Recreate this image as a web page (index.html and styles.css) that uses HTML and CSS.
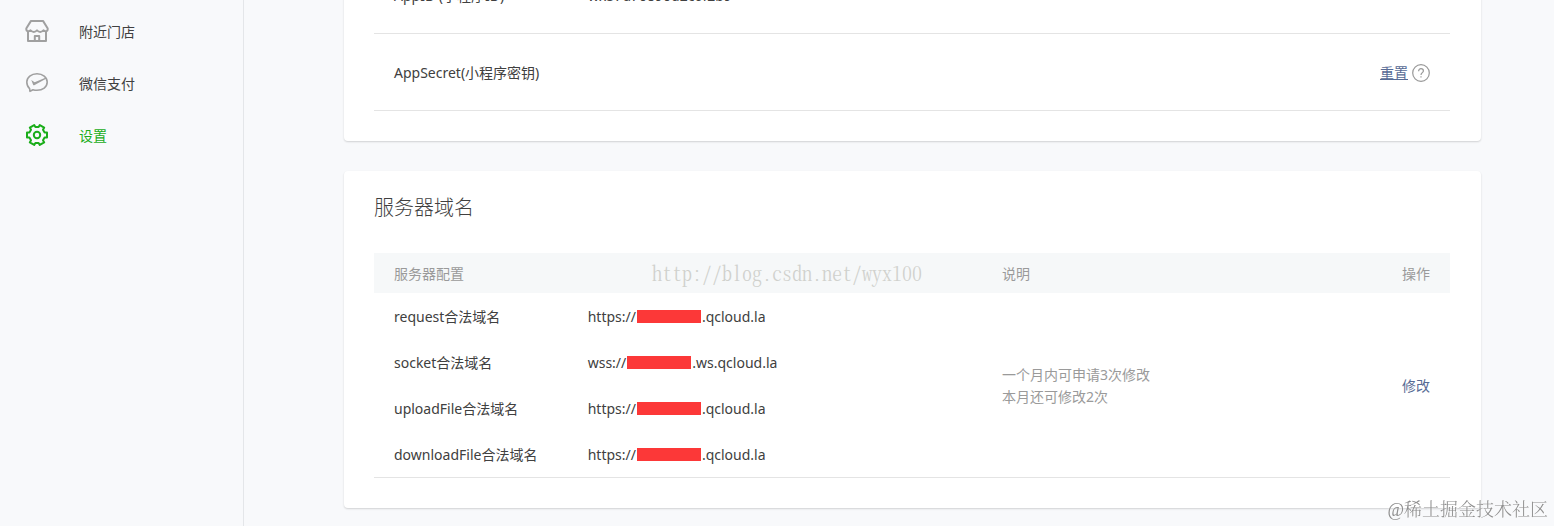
FILE: index.html
```html
<!DOCTYPE html>
<html lang="zh-CN">
<head>
<meta charset="utf-8">
<title>设置</title>
<link rel="stylesheet" href="styles.css">
</head>
<body>
<div class="layout">
  <nav class="sidebar">
    <a class="nav-item" href="#stores">
      <svg class="nav-icon" viewBox="0 0 24 24"><path d="M6 1.900H18L22.600 9.200C23.200 12 20.800 13.300 18.400 11.400C16.400 13.400 14 13.400 12 11.400C10 13.400 7.600 13.400 5.600 11.400C3.200 13.300.800 12 1.400 9.200Z"/><path d="M3 12.500V22H21V12.500M9.800 22V17H14.200V22"/></svg>
      <span>附近门店</span>
    </a>
    <a class="nav-item" href="#pay">
      <svg class="nav-icon thin" viewBox="0 0 24 24"><path d="M4.600 17.600C2.800 16 1.800 13.700 1.800 11.100C1.800 6.200 6.300 2.700 12 2.700S22.200 6.200 22.200 11.100S17.700 19.300 12 19.300C10.600 19.300 9.200 19.100 8 18.700L5 20.300Z"/><path class="tick" d="M6.300 8.900L9.600 11.200L21 6.500L21.500 7.500L9.200 14.200Q8.500 14.500 8.100 13.700Z"/></svg>
      <span>微信支付</span>
    </a>
    <a class="nav-item active" href="#settings" aria-current="page">
      <svg class="nav-icon" viewBox="0 0 24 24"><path d="M19.600 9.400L22 9.500V14.500L19.600 14.600L18 17.300L19.200 19.400L14.800 21.900L13.600 19.900H10.400L9.200 21.900L4.800 19.400L6 17.300L4.400 14.600L2 14.500V9.500L4.400 9.400L6 6.700L4.800 4.600L9.200 2.100L10.400 4.100H13.600L14.800 2.100L19.200 4.600L18 6.700Z"/><circle cx="12" cy="12" r="3.200"/></svg>
      <span>设置</span>
    </a>
  </nav>
  <main class="content">
    <section class="card account">
      <div class="field"><span class="label">AppID (小程序ID)</span><span>wx57d70890d2c6f2b9</span></div>
      <div class="field">
        <span class="label">AppSecret(小程序密钥)</span>
        <span class="actions"><a class="link underlined" href="#reset">重置</a><button class="help" type="button" aria-label="帮助"><svg viewBox="0 0 18 18"><circle cx="9" cy="9" r="8.300"/><path d="M6.600 7.200C6.600 5.600 7.600 4.700 9 4.700S11.400 5.600 11.400 6.900C11.400 8.600 9 8.700 9 10.900M9 12.300V13.500"/></svg></button></span>
      </div>
    </section>
    <section class="card">
      <h2 class="title">服务器域名</h2>
      <div class="table-wrap">
        <table class="domains">
          <colgroup><col class="col-name"><col class="col-host"><col><col class="col-action"></colgroup>
          <thead><tr><th>服务器配置</th><th></th><th>说明</th><th class="right">操作</th></tr></thead>
          <tbody>
            <tr><td>request合法域名</td><td>https://<span class="redacted"></span>.qcloud.la</td><td class="note" rowspan="4">一个月内可申请3次修改<br>本月还可修改2次</td><td class="right" rowspan="4"><a class="link" href="#edit">修改</a></td></tr>
            <tr><td>socket合法域名</td><td>wss://<span class="redacted"></span>.ws.qcloud.la</td></tr>
            <tr><td>uploadFile合法域名</td><td>https://<span class="redacted"></span>.qcloud.la</td></tr>
            <tr><td>downloadFile合法域名</td><td>https://<span class="redacted"></span>.qcloud.la</td></tr>
          </tbody>
        </table>
        <span class="blog-mark">http://blog.csdn.net/wyx100</span>
      </div>
    </section>
  </main>
</div>
<span class="site-mark">@稀土掘金技术社区</span>
</body>
</html>
```
FILE: styles.css
```css
* { box-sizing: border-box; }
body {
  margin: 0;
  overflow: hidden;
  background: #f8f9fb;
  color: #404040;
  font: 400 14px/22px "Noto Sans", "Noto Sans CJK SC", sans-serif;
}
a { color: inherit; text-decoration: none; }
.layout { display: flex; height: 100vh; }
.sidebar {
  flex: 0 0 244px;
  padding-top: 5px;
  border-right: 1px solid #e4e6e9;
}
.nav-item {
  display: flex;
  align-items: center;
  gap: 30px;
  height: 52px;
  padding-left: 25px;
}
.nav-item span { padding-top: 2px; }
.nav-icon {
  width: 24px;
  height: 24px;
  fill: none;
  stroke: #a0a0a0;
  stroke-width: 2;
  stroke-linejoin: round;
}
.thin { stroke-width: 1.6; }
.nav-icon .tick { fill: #a0a0a0; stroke: none; }
.active { color: #1aad19; }
.active .nav-icon { stroke: #1aad19; }
.content { flex: 1; padding: 0 73px 0 100px; }
.card {
  padding: 19px 31px 30px 30px;
  margin-bottom: 30px;
  background: #fff;
  border-radius: 4px;
  box-shadow: 0 1px 2px rgba(0, 0, 0, .16);
}
.account { margin-top: -43px; padding-top: 0; }
.field {
  display: flex;
  align-items: center;
  height: 77px;
  padding: 2px 20px 0;
  border-bottom: 1px solid #e4e4e4;
}
.label { flex: 0 0 194px; }
.actions { display: flex; align-items: center; gap: 4px; margin-left: auto; }
.link { color: #576b95; }
.underlined { text-decoration: underline; }
.help { display: block; width: 18px; height: 18px; padding: 0; border: 0; background: none; }
.help svg { display: block; fill: none; stroke: #999; stroke-width: 1.2; }
.title { margin: 0 0 27px; font-size: 20px; line-height: 36px; font-weight: 300; }
.table-wrap { position: relative; }
.domains {
  width: 100%;
  table-layout: fixed;
  border-collapse: separate;
  border-spacing: 0;
  border-bottom: 1px solid #e4e4e4;
}
.col-name { width: 18%; }
.col-host { width: 38.5%; }
.col-action { width: 10%; }
th { height: 40px; padding: 2px 20px 0; background: #f6f8f9; color: #9a9a9a; font-weight: 400; text-align: left; }
td { height: 46px; padding: 2px 20px 0; white-space: nowrap; }
.note { color: #9a9a9a; }
.domains .right { text-align: right; }
.redacted { display: inline-block; width: 64px; height: 13px; margin: 0 1px; background: #fc3838; vertical-align: -1px; }
.blog-mark {
  position: absolute;
  top: 8px;
  left: 278px;
  color: #d0d1cd;
  font: 300 20px/24px "Noto Serif CJK SC", "Liberation Mono", monospace;
  font-feature-settings: "hwid";
}
.site-mark {
  position: fixed;
  right: 6px;
  bottom: 4px;
  color: #8f8f8f;
  font: 300 18px/24px "Liberation Serif", "Noto Serif CJK SC", "Noto Sans CJK SC", serif;
  text-shadow: 0 0 2px #fff;
}
```
